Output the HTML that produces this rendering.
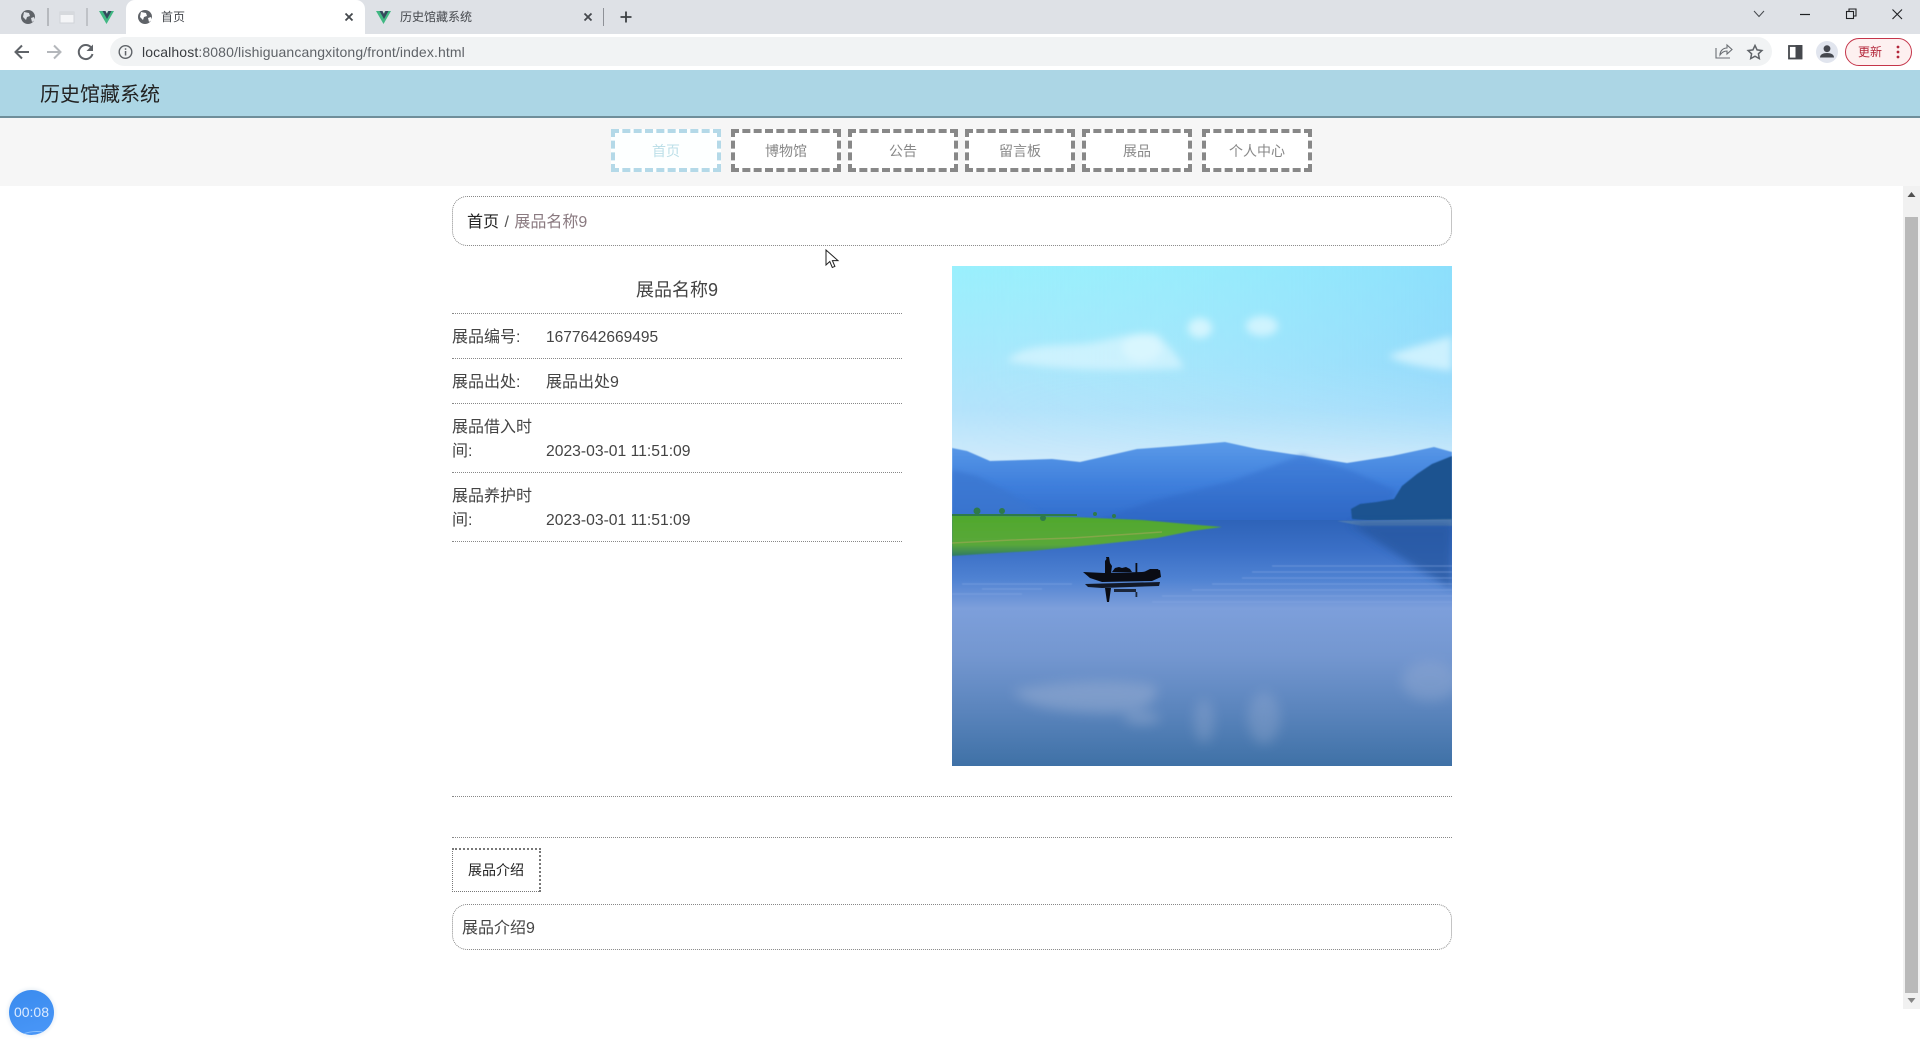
<!DOCTYPE html>
<html lang="zh"><head><meta charset="utf-8"><title>历史馆藏系统</title>
<style>
*{box-sizing:border-box;margin:0;padding:0}
html,body{width:1920px;height:1040px;overflow:hidden;background:#fff;font-family:"Liberation Sans","Noto Sans CJK SC",sans-serif;color:#444}
.a{position:absolute}
.ln{position:absolute;height:0;border-top:1px dotted #888}
.nav{position:absolute;top:129px;width:110px;height:43px;border:4px dashed #888;background:#fff;color:#888;font-size:14px;line-height:37px;text-align:center}
.t{position:absolute;font-size:16px;line-height:24px;color:#444;white-space:nowrap}
svg{position:absolute;overflow:visible}
</style></head><body>

<!-- browser chrome -->
<div class="a" style="left:0;top:0;width:1920px;height:34px;background:#dee1e6"></div>
<div class="a" style="left:0;top:34px;width:1920px;height:36px;background:#fff"></div>
<div class="a" style="left:126px;top:0;width:239px;height:34px;background:#fff;border-radius:9px 9px 0 0"></div>
<div class="a" style="left:110px;top:37px;width:1662px;height:29px;background:#f1f3f4;border-radius:15px"></div>

<svg style="left:0;top:0" width="700" height="70" viewBox="0 0 700 70">
  <g id="gl">
    <circle cx="28" cy="17" r="7" fill="#5f6368"/>
    <path d="M24 12l5 1 1 3-3 1-1 3-3-3zM31 18l3-1 1 3-3 2z" fill="#dee1e6"/>
  </g>
  <rect x="47.500" y="8" width="1" height="18" fill="#8e9197"/>
  <rect x="60" y="12" width="14" height="11" fill="#f4f5f7" stroke="#d0d3d8"/>
  <rect x="60" y="12" width="14" height="3" fill="#d6d9dd"/>
  <rect x="86.500" y="8" width="1" height="18" fill="#a0a3a8"/>
  <path d="M99 11h6l1.500 3 1.500-3h6l-7.500 13z" fill="#41b883"/>
  <path d="M102.500 11h3l1.500 3 1.500-3h3l-4.500 8z" fill="#35495e"/>
  <circle cx="145" cy="17" r="7" fill="#5f6368"/>
  <path d="M141 12l5 1 1 3-3 1-1 3-3-3zM148 18l3-1 1 3-3 2z" fill="#fff"/>
  <path d="M345.500 13.500l7 7m0-7l-7 7" stroke="#45484d" stroke-width="1.800"/>
  <path d="M376 11h6l1.500 3 1.500-3h6l-7.500 13z" fill="#41b883"/>
  <path d="M379.500 11h3l1.500 3 1.500-3h3l-4.500 8z" fill="#35495e"/>
  <path d="M584.500 13.500l7 7m0-7l-7 7" stroke="#45484d" stroke-width="1.800"/>
  <rect x="603" y="8" width="1" height="18" fill="#8e9197"/>
  <path d="M626 11.500v11m-5.500-5.500h11" stroke="#3c4043" stroke-width="1.800"/>
  <!-- nav -->
  <path d="M29 52H16m6-6.500L15.500 52l6.500 6.500" fill="none" stroke="#5f6368" stroke-width="2"/>
  <path d="M47 52h13m-6-6.500l6.500 6.500-6.500 6.500" fill="none" stroke="#b4b7bb" stroke-width="2"/>
  <path d="M91.500 48a7 7 0 1 0 1 6" fill="none" stroke="#5f6368" stroke-width="2"/>
  <path d="M93 44.500v6.500h-6.500z" fill="#5f6368"/>
  <circle cx="125.500" cy="52" r="6.300" fill="none" stroke="#5f6368" stroke-width="1.400"/>
  <rect x="124.800" y="51" width="1.500" height="4.500" fill="#5f6368"/><rect x="124.800" y="48.300" width="1.500" height="1.500" fill="#5f6368"/>
</svg>
<div class="a" style="left:161px;top:8px;font-size:12px;line-height:18px;color:#45484d">首页</div>
<div class="a" style="left:400px;top:8px;font-size:12px;line-height:18px;color:#45484d">历史馆藏系统</div>
<div class="a" style="left:142px;top:42px;font-size:14px;line-height:20px;color:#5f6368;white-space:nowrap;letter-spacing:.12px"><span style="color:#3a3d41">localhost</span>:8080/lishiguancangxitong/front/index.html</div>

<svg style="left:1700px;top:0" width="220" height="70" viewBox="1700 0 220 70">
  <!-- window controls -->
  <path d="M1754 11l5 5.500 5-5.500" fill="none" stroke="#45484d" stroke-width="1"/>
  <path d="M1800 14.500h10" stroke="#202124" stroke-width="1.200"/>
  <rect x="1846.500" y="11.500" width="7" height="7" fill="none" stroke="#202124" stroke-width="1.100"/>
  <path d="M1849 11.500v-2.500h7v7h-2.500" fill="none" stroke="#202124" stroke-width="1.100"/>
  <path d="M1892.500 9.500l9.500 9.500m0-9.500l-9.500 9.500" stroke="#202124" stroke-width="1.100"/>
  <!-- share -->
  <path d="M1716 48v10h14M1720 55c0-4 3-7 7-7v-3l5 4.500-5 4.500v-3c-3 0-5 1-7 4z" fill="none" stroke="#6a6e73" stroke-width="1.100"/>
  <!-- star -->
  <path d="M1755 45.500l2.100 4.400 4.800.6-3.500 3.300.9 4.800-4.300-2.400-4.300 2.400.9-4.800-3.500-3.300 4.800-.6z" fill="none" stroke="#5f6368" stroke-width="1.500"/>
  <!-- side panel -->
  <rect x="1789" y="46" width="12.500" height="12.500" fill="none" stroke="#45484d" stroke-width="1.800"/>
  <rect x="1795.500" y="45" width="6.800" height="14" fill="#45484d"/>
  <!-- profile -->
  <circle cx="1827" cy="52" r="11" fill="#e1e5ee"/>
  <circle cx="1827" cy="48.700" r="3.400" fill="#45484f"/>
  <path d="M1820 57.500c0-3 3-4.500 7-4.500s7 1.500 7 4.500z" fill="#45484f"/>
  <!-- update pill -->
  <rect x="1845.500" y="38.500" width="66" height="27" rx="13.500" fill="#fdf0f0" stroke="#c5354a" stroke-width="1"/>
  <circle cx="1898" cy="47" r="1.400" fill="#b3263a"/><circle cx="1898" cy="52" r="1.400" fill="#b3263a"/><circle cx="1898" cy="57" r="1.400" fill="#b3263a"/>
</svg>
<div class="a" style="left:1858px;top:43px;font-size:12px;line-height:18px;color:#b3263a">更新</div>

<!-- page header -->
<div class="a" style="left:0;top:70px;width:1920px;height:48px;background:#acd6e5;border-bottom:2px solid #6f8e9a"></div>
<div class="a" style="left:40px;top:81px;font-size:20px;line-height:28px;color:#222">历史馆藏系统</div>

<!-- nav -->
<div class="a" style="left:0;top:118px;width:1920px;height:68px;background:#f6f6f6"></div>
<div class="nav" style="left:611px;border-color:#b4d9e8;color:#bcdfe8;background:#fdffff">首页</div>
<div class="nav" style="left:731px">博物馆</div>
<div class="nav" style="left:848px">公告</div>
<div class="nav" style="left:965px">留言板</div>
<div class="nav" style="left:1082px">展品</div>
<div class="nav" style="left:1202px">个人中心</div>

<!-- breadcrumb -->
<div class="a" style="left:452px;top:196px;width:1000px;height:50px;border:1px dotted #888;border-radius:15px"></div>
<div class="a" style="left:467px;top:211px;font-size:16px;line-height:24px;color:#222;white-space:nowrap">首页 <span style="color:#555;margin:0 1px">/</span> <span style="color:#8a7a80">展品名称9</span></div>

<!-- detail -->
<div class="a" style="left:452px;top:276px;width:450px;text-align:center;font-size:18px;line-height:28px;color:#444">展品名称9</div>
<div class="ln" style="left:452px;top:313px;width:450px"></div>
<div class="t" style="left:452px;top:326px">展品编号:</div><div class="t" style="left:546px;top:326px;font-size:15.500px">1677642669495</div>
<div class="ln" style="left:452px;top:358px;width:450px"></div>
<div class="t" style="left:452px;top:371px">展品出处:</div><div class="t" style="left:546px;top:371px">展品出处9</div>
<div class="ln" style="left:452px;top:403px;width:450px"></div>
<div class="t" style="left:452px;top:416px">展品借入时<br>间:</div><div class="t" style="left:546px;top:440px;font-size:15.700px">2023-03-01 11:51:09</div>
<div class="ln" style="left:452px;top:472px;width:450px"></div>
<div class="t" style="left:452px;top:485px">展品养护时<br>间:</div><div class="t" style="left:546px;top:509px;font-size:15.700px">2023-03-01 11:51:09</div>
<div class="ln" style="left:452px;top:541px;width:450px"></div>

<!-- image -->
<svg style="left:952px;top:266px;overflow:hidden" width="500" height="500" viewBox="0 0 500 500">
  <defs>
    <linearGradient id="sky" x1="0" y1="0" x2="0" y2="1">
      <stop offset="0" stop-color="#9af0fd"/><stop offset=".3" stop-color="#a6e9fc"/><stop offset=".55" stop-color="#b4e3fb"/><stop offset=".75" stop-color="#cfeafb"/><stop offset="1" stop-color="#d8ecfb"/>
    </linearGradient>
    <linearGradient id="skyr" x1="0" y1="0" x2="1" y2="0">
      <stop offset="0" stop-color="#a6f2fd" stop-opacity="0"/><stop offset="1" stop-color="#7fcffb" stop-opacity=".5"/>
    </linearGradient>
    <linearGradient id="fade" x1="0" y1="0" x2="0" y2="1">
      <stop offset="0" stop-color="#fff"/><stop offset=".5" stop-color="#fff"/><stop offset="1" stop-color="#000"/>
    </linearGradient>
    <mask id="skym" maskUnits="userSpaceOnUse" x="0" y="0" width="500" height="200"><rect width="500" height="200" fill="url(#fade)"/></mask>
    <linearGradient id="mt" x1="0" y1="0" x2="0" y2="1">
      <stop offset="0" stop-color="#5a9ae8"/><stop offset=".5" stop-color="#3f7fdc"/><stop offset="1" stop-color="#2f69c8"/>
    </linearGradient>
    <linearGradient id="mt2" x1="0" y1="0" x2="0" y2="1">
      <stop offset="0" stop-color="#3d7ad6"/><stop offset="1" stop-color="#2c64c2"/>
    </linearGradient>
    <linearGradient id="wa" x1="0" y1="0" x2="0" y2="1">
      <stop offset="0" stop-color="#2e63b8"/><stop offset=".12" stop-color="#3a6fc6"/><stop offset=".24" stop-color="#4f82d2"/><stop offset=".36" stop-color="#7d9fdb"/><stop offset=".55" stop-color="#7497d0"/><stop offset=".78" stop-color="#5a84bc"/><stop offset="1" stop-color="#3f71a6"/>
    </linearGradient>
    <linearGradient id="gr" x1="0" y1="0" x2="0" y2="1">
      <stop offset="0" stop-color="#4fa82c"/><stop offset=".72" stop-color="#5aa83a"/><stop offset="1" stop-color="#2f7a64"/>
    </linearGradient>
    <filter id="b6" x="-30%" y="-60%" width="160%" height="220%"><feGaussianBlur stdDeviation="6"/></filter>
    <filter id="b4" x="-30%" y="-60%" width="160%" height="220%"><feGaussianBlur stdDeviation="4"/></filter>
    <filter id="b2"><feGaussianBlur stdDeviation="2.500"/></filter>
    <filter id="b1"><feGaussianBlur stdDeviation=".6"/></filter>
  </defs>
  <rect width="500" height="260" fill="url(#sky)"/>
  <rect width="500" height="200" fill="url(#skyr)" mask="url(#skym)"/>
  <!-- clouds -->
  <g fill="#e4f9ff" filter="url(#b4)">
    <ellipse cx="248" cy="62" rx="12" ry="10" opacity=".75"/>
    <ellipse cx="310" cy="60" rx="16" ry="10" opacity=".7"/>
    <path d="M55 95C70 78 100 80 125 78 150 78 175 65 205 68 215 78 225 88 232 102 190 105 110 106 55 95z" opacity=".6"/>
    <ellipse cx="190" cy="82" rx="20" ry="14" opacity=".55"/>
    <path d="M436 90C455 82 480 76 500 70V105C480 102 455 100 436 90z" opacity=".7"/>
  </g>
  <!-- far mountains -->
  <path d="M0 182L15 185 38 195 70 194 100 193 128 196 150 191 185 183 225 180 273 176 305 183 345 189 395 197 440 190 482 181 500 186V262H0z" fill="url(#mt)" filter="url(#b1)"/>
  <path d="M0 204L25 210 55 225 95 252V262H0z" fill="#3a76cf" opacity=".7" filter="url(#b2)"/>
  <path d="M130 260L200 235 280 215 350 189 400 205 445 225 425 260z" fill="url(#mt2)" filter="url(#b2)" opacity=".7"/>
  <!-- hill right -->
  <path d="M500 190L480 198 465 208 450 220 442 233 425 236 408 238 399 243 400 253 430 256 500 258z" fill="#1c5290" filter="url(#b1)"/>
  <!-- water -->
  <rect y="254" width="500" height="246" fill="url(#wa)"/>
  <path d="M385 255L500 253V260H410z" fill="#5f86ad" opacity=".7" filter="url(#b1)"/>
  <path d="M398 258L500 258V322L470 305 440 285z" fill="#25569f" opacity=".75" filter="url(#b4)"/>
  <!-- ripples -->
  <g stroke="#8aabe4" stroke-width="1.300" opacity=".45" filter="url(#b1)" fill="none">
    <path d="M320 300h180M300 306h200M290 312h210M260 318h240M240 324h260M210 330h290M200 336h300M10 318h110M0 328h70M30 323h60"/>
  </g>
  <!-- reflections -->
  <g fill="#a9b9d8" filter="url(#b6)" opacity=".4">
    <path d="M60 425C100 415 170 412 205 420 205 440 190 450 130 446 100 444 75 440 60 425z"/>
    <ellipse cx="190" cy="452" rx="18" ry="6"/>
    <ellipse cx="252" cy="455" rx="10" ry="22" opacity=".7"/>
    <ellipse cx="312" cy="452" rx="16" ry="26" opacity=".7"/>
    <ellipse cx="478" cy="415" rx="28" ry="20" opacity=".7"/>
  </g>
  <!-- land -->
  <path d="M0 249L60 250 120 251 190 254 235 258 270 261 240 265 205 272 150 278 80 285 30 288 0 290z" fill="url(#gr)" filter="url(#b1)"/>
  <path d="M0 277L60 274 120 272 210 266" stroke="#a8a65a" stroke-width="1.500" fill="none" opacity=".55"/>
  <g fill="#2e7a4a"><circle cx="25" cy="245" r="3.500"/><circle cx="50" cy="245" r="3"/><circle cx="91" cy="252" r="3"/><circle cx="143" cy="248" r="2"/><circle cx="162" cy="250" r="2"/><rect x="0" y="248" width="125" height="2"/></g>
  <!-- boat -->
  <g fill="#0a0c14">
    <path d="M131 306L152 307 190 306 208 304 209 311 200 315 150 316 138 312z"/>
    <path d="M153 307V295l1.500-2-.5-2h3l.5 3 .5 3 2 3-1 7z"/>
    <path d="M160 306l3-4 4-1 3 1 4-1 4 2 2 3z"/>
    <path d="M183.500 297h1.800v10h-1.800z"/>
    <path d="M192 306l6-3 8 0 2 3z"/>
    <path d="M133 318L208 316 207 320 150 322 136 321z" opacity=".9"/>
    <path d="M153 322h6l-1 7-1 7h-2z"/>
    <path d="M162 323h22v3h-22zM183.500 326h1.800v5h-1.800z" opacity=".8"/>
  </g>
</svg>

<!-- lower -->
<div class="ln" style="left:452px;top:796px;width:1000px"></div>
<div class="ln" style="left:452px;top:837px;width:1000px"></div>
<div class="a" style="left:452px;top:848px;width:89px;height:44px;border:1px dotted #777;border-right:2px dotted #777;border-top:2px dotted #777;font-size:14px;line-height:41px;text-align:center;color:#222">展品介绍</div>
<div class="a" style="left:452px;top:904px;width:1000px;height:46px;border:1px dotted #888;border-radius:15px"></div>
<div class="a" style="left:462px;top:917px;font-size:16px;line-height:24px;color:#444">展品介绍9</div>

<!-- scrollbar -->
<div class="a" style="left:1903px;top:186px;width:17px;height:823px;background:#f1f1f1"></div>
<div class="a" style="left:1905px;top:217px;width:13px;height:776px;background:#b9b9b9"></div>
<svg style="left:1903px;top:186px" width="17" height="823" viewBox="0 0 17 823">
  <path d="M8.500 6l4 5h-8z" fill="#505050"/>
  <path d="M8.500 817l4-5h-8z" fill="#858585"/>
</svg>

<!-- cursor -->
<svg style="left:825px;top:249px" width="14" height="20" viewBox="0 0 14 20">
  <path d="M1 1v15l3.800-3.500 2.500 6 2.600-1.100-2.500-5.800H13z" fill="#fff" stroke="#222" stroke-width="1"/>
</svg>

<!-- timer -->
<div class="a" style="left:9px;top:990px;width:45px;height:45px;border-radius:50%;background:linear-gradient(160deg,#3a8bee,#4a97f8);box-shadow:0 0 3px 2px #eef3f8;color:#dcebff;font-size:14px;line-height:45px;text-align:center;overflow:hidden">00:08<span style="position:absolute;left:8px;bottom:-16px;width:40px;height:20px;border-radius:50%;border-top:1px solid #8fc4ff"></span></div>

</body></html>
